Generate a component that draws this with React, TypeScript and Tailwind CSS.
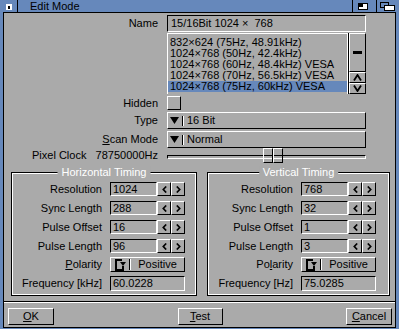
import React from "react";

const raised =
  "border border-t-white border-l-white border-b-black border-r-black";
const recessed =
  "border border-t-black border-l-black border-b-white border-r-white";

const ChevL = () => (
  <svg width="5" height="7" viewBox="0 0 5 7">
    <path d="M4.2 0.5 L1.3 3.5 L4.2 6.5" fill="none" stroke="black" strokeWidth="1.7" />
  </svg>
);
const ChevR = () => (
  <svg width="5" height="7" viewBox="0 0 5 7">
    <path d="M0.8 0.5 L3.7 3.5 L0.8 6.5" fill="none" stroke="black" strokeWidth="1.7" />
  </svg>
);

const DownTri = () => (
  <svg width="9" height="7" viewBox="0 0 9 7">
    <path d="M0 0 H9 L4.5 7 Z" fill="black" />
  </svg>
);

const CycleIcon = () => (
  <svg width="11" height="12" viewBox="0 0 11 12">
    <rect x="0" y="0" width="2" height="12" fill="black" />
    <rect x="0" y="0" width="7" height="2" fill="black" />
    <rect x="0" y="10" width="9" height="2" fill="black" />
    <rect x="7" y="7" width="2" height="5" fill="black" />
    <path d="M5 3 H11 L8 7 Z" fill="black" />
  </svg>
);

function Group({
  title,
  outer,
  labelW,
  rows,
  polarity,
  freqLabel,
  freq,
}: {
  title: string;
  outer: string;
  labelW: string;
  rows: [string, string][];
  polarity: React.ReactNode;
  freqLabel: string;
  freq: string;
}) {
  return (
    <div className={`relative ${outer} h-[124px] border border-black`}>
      <span className="absolute left-1/2 -translate-x-1/2 -top-[7px] bg-[#aaaaaa] px-[4px] leading-[13px] text-white whitespace-nowrap">
        {title}
      </span>
      <div className="h-full border border-white flex flex-col pt-[8px]">
        {rows.map(([l, v], i) => (
          <div
            key={l}
            className={`flex items-center h-[14px] ${i > 0 ? "mt-[5px]" : ""}`}
          >
            <div className={`${labelW} text-right whitespace-nowrap`}>{l}</div>
            <div className={`ml-[8px] w-[47px] h-[14px] ${recessed} flex items-center pl-[2px]`}>
              {v}
            </div>
            <div className={`w-[14px] h-[14px] ${raised} flex items-center justify-center`}>
              <ChevL />
            </div>
            <div className={`w-[14px] h-[14px] ${raised} flex items-center justify-center`}>
              <ChevR />
            </div>
          </div>
        ))}
        <div className="flex items-center h-[15px] mt-[4px]">
          <div className={`${labelW} text-right whitespace-nowrap`}>{polarity}</div>
          <div className={`ml-[8px] w-[75px] h-[15px] ${raised} flex items-center pl-[4px]`}>
            <CycleIcon />
            <div className="ml-[3px] w-px h-[11px] bg-black" />
            <div className="w-px h-[11px] bg-white" />
            <div className="flex-1 text-center">Positive</div>
          </div>
        </div>
        <div className="flex items-center h-[15px] mt-[4px]">
          <div className={`${labelW} text-right whitespace-nowrap`}>{freqLabel}</div>
          <div className={`ml-[8px] w-[75px] h-[15px] ${recessed} flex items-center pl-[2px]`}>
            {freq}
          </div>
        </div>
      </div>
    </div>
  );
}

export default function App() {
  const items = [
    "832×624 (75Hz, 48.91kHz)",
    "1024×768 (50Hz, 42.4kHz)",
    "1024×768 (60Hz, 48.4kHz) VESA",
    "1024×768 (70Hz, 56.5kHz) VESA",
    "1024×768 (75Hz, 60kHz) VESA",
  ];
  return (
    <div className="w-[399px] h-[329px] bg-[#6688bb] flex flex-col font-['Liberation_Sans',sans-serif] text-[11px] text-black leading-none overflow-hidden">
      {/* title bar */}
      <div className="h-[12px] flex shrink-0">
        <div className="w-[17px] pt-[4px] pl-[6px]">
          <div className="w-[6px] h-[6px] bg-white flex items-center justify-center">
            <div className="w-[2px] h-[3px] bg-black" />
          </div>
        </div>
        <div className="w-px bg-black" />
        <div className="flex-1 pl-[12px] leading-[12px]">Edit Mode</div>
        <div className="w-px bg-black" />
        <div className="w-[23px] pl-[5px] pt-[3px]">
          <div className="w-[10px] h-[7px] border border-black bg-white">
            <div className="w-[4px] h-[3px] bg-black" />
          </div>
        </div>
        <div className="w-px bg-black" />
        <div className="w-[22px] pl-[3px] pt-[2px]">
          <svg width="16" height="9" viewBox="0 0 16 9">
            <rect x="0.5" y="0.5" width="8" height="5" fill="#6688bb" stroke="black" />
            <rect x="4.5" y="3.5" width="10" height="5" fill="white" stroke="black" />
          </svg>
        </div>
      </div>

      {/* body */}
      <div className="flex-1 flex px-[3px] pb-px">
        <div className="flex-1 border border-black bg-[#aaaaaa] flex flex-col">
          {/* Name */}
          <div className="flex items-center mt-[2px] h-[17px]">
            <div className="w-[154px] text-right">Name</div>
            <div className={`ml-[9px] w-[199px] h-[17px] ${recessed} flex items-center pl-[3px] whitespace-pre`}>
              {"15/16Bit 1024 ×  768"}
            </div>
          </div>
          {/* List */}
          <div className="flex mt-[1px] h-[61px]">
            <div className="w-[154px]" />
            <div className="ml-[9px] w-[199px] h-[61px] flex">
              <div className="w-[181px] border-t border-l border-r border-white pt-[3px]">
                {items.map((t, i) => (
                  <div
                    key={t}
                    className={`h-[11px] leading-[11px] pl-[2px] whitespace-nowrap ${
                      i === 4 ? "bg-[#6688bb]" : ""
                    }`}
                  >
                    {t}
                  </div>
                ))}
              </div>
              <div className="w-[18px] border-l border-black flex flex-col">
                <div className={`h-[39px] ${raised} flex items-center justify-center`}>
                  <div className="w-[9px] h-[3px] bg-black" />
                </div>
                <div className={`h-[11px] ${raised} flex items-center justify-center`}>
                  <svg width="9" height="7" viewBox="0 0 9 7">
                    <path d="M1 6.5 L4.5 1 L8 6.5" fill="none" stroke="black" strokeWidth="1.8" />
                  </svg>
                </div>
                <div className={`h-[11px] ${raised} flex items-center justify-center`}>
                  <svg width="9" height="7" viewBox="0 0 9 7">
                    <path d="M1 0.5 L4.5 6 L8 0.5" fill="none" stroke="black" strokeWidth="1.8" />
                  </svg>
                </div>
              </div>
            </div>
          </div>
          {/* Hidden */}
          <div className="flex items-center mt-[2px] h-[14px]">
            <div className="w-[154px] text-right">Hidden</div>
            <div className={`ml-[9px] w-[14px] h-[14px] ${raised}`} />
          </div>
          {/* Type */}
          <div className="flex items-center mt-[2px] h-[17px]">
            <div className="w-[154px] text-right">Type</div>
            <div className={`ml-[9px] w-[199px] h-[17px] ${raised} flex items-center pl-[2px]`}>
              <DownTri />
              <div className="ml-[3px] w-px h-[10px] bg-black" />
              <div className="w-px h-[10px] bg-white" />
              <div className="ml-[3px]">16 Bit</div>
            </div>
          </div>
          {/* Scan Mode */}
          <div className="flex items-center mt-[2px] h-[17px]">
            <div className="w-[154px] text-right">
              <u>S</u>can Mode
            </div>
            <div className={`ml-[9px] w-[199px] h-[17px] ${raised} flex items-center pl-[2px]`}>
              <DownTri />
              <div className="ml-[3px] w-px h-[10px] bg-black" />
              <div className="w-px h-[10px] bg-white" />
              <div className="ml-[3px]">Normal</div>
            </div>
          </div>
          {/* Pixel Clock */}
          <div className="flex items-center h-[15px]">
            <div className="w-[154px] flex justify-between pl-[28px]">
              <span>Pixel Clock</span>
              <span>78750000Hz</span>
            </div>
            <div className="ml-[9px] w-[199px] h-[15px] relative">
              <div className={`mt-[7px] h-[4px] ${recessed}`} />
              <div className="absolute left-[96px] top-0 flex">
                <div className={`w-[10px] h-[15px] ${raised}`} />
                <div className={`w-[10px] h-[15px] ${raised}`} />
              </div>
            </div>
          </div>
          {/* Groups */}
          <div className="flex mt-[9px] pl-[7px] gap-[10px]">
            <Group
              title="Horizontal Timing"
              outer="w-[186px]"
              labelW="w-[89px]"
              rows={[
                ["Resolution", "1024"],
                ["Sync Length", "288"],
                ["Pulse Offset", "16"],
                ["Pulse Length", "96"],
              ]}
              polarity={
                <>
                  <u>P</u>olarity
                </>
              }
              freqLabel="Frequency [kHz]"
              freq="60.0228"
            />
            <Group
              title="Vertical Timing"
              outer="w-[183px]"
              labelW="w-[84px]"
              rows={[
                ["Resolution", "768"],
                ["Sync Length", "32"],
                ["Pulse Offset", "1"],
                ["Pulse Length", "3"],
              ]}
              polarity={
                <>
                  Po<u>l</u>arity
                </>
              }
              freqLabel="Frequency [Hz]"
              freq="75.0285"
            />
          </div>
          {/* separator */}
          <div className="mt-[5px] h-px bg-black" />
          <div className="h-px bg-white" />
          {/* buttons */}
          <div className="mt-[5px] flex justify-between pl-[4px] pr-[3px]">
            <div className={`w-[46px] h-[17px] ${raised} flex items-center justify-center`}>
              <span>
                <u>O</u>K
              </span>
            </div>
            <div className={`w-[45px] h-[17px] ${raised} flex items-center justify-center`}>
              <span>
                <u>T</u>est
              </span>
            </div>
            <div className={`w-[46px] h-[17px] ${raised} flex items-center justify-center`}>
              <span>
                <u>C</u>ancel
              </span>
            </div>
          </div>
        </div>
      </div>
    </div>
  );
}
